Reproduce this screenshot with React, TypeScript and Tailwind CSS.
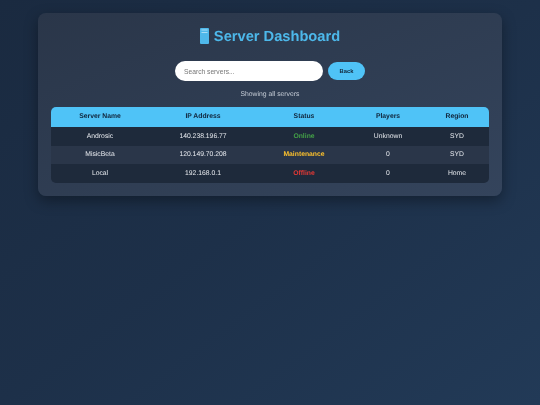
export default function App() {
  const rows = [
    { name: "Androsic", ip: "140.238.196.77", status: "Online", color: "text-[#43a047]", players: "Unknown", region: "SYD", bg: "bg-[#1e2a3b]" },
    { name: "MisicBeta", ip: "120.149.70.208", status: "Maintenance", color: "text-[#fbc02d]", players: "0", region: "SYD", bg: "bg-[#2a3649]" },
    { name: "Local", ip: "192.168.0.1", status: "Offline", color: "text-[#e53935]", players: "0", region: "Home", bg: "bg-[#1e2a3b]" },
  ];
  return (
    <div className="w-[540px] h-[405px] overflow-hidden bg-gradient-to-br from-[#1a2a40] via-[#1d3049] to-[#223a57] blur-[0.35px] [text-rendering:geometricPrecision] font-['Liberation_Sans',Arial,sans-serif] pt-[13px] px-[38px]">
      <div className="h-[182.5px] rounded-[8px] bg-gradient-to-br from-[#2a3649] to-[#34445c] px-[13px] pt-[13px] shadow-[0_5px_14px_rgba(0,0,0,0.35)]">
        <div className="flex h-[20px] items-center justify-center gap-[5px]">
          <svg width="9" height="16" viewBox="0 0 9 16" className="shrink-0">
            <rect x="0" y="0" width="9" height="16" rx="1" fill="#4fb8ea" />
            <rect x="1.5" y="1.5" width="6" height="1" fill="#a8dcf5" />
            <rect x="1.5" y="4" width="6" height="1" fill="#a8dcf5" />
          </svg>
          <h1 className="pt-[1px] text-[14.67px] leading-[20px] font-bold text-[#4db8ea]">Server Dashboard</h1>
        </div>
        <div className="mt-[15px] flex items-center justify-center gap-[5px]">
          <input
            readOnly
            placeholder="Search servers..."
            className="w-[148px] h-[20px] rounded-full bg-white px-[9px] text-[6.7px] text-[#333] placeholder:text-[#777] outline-none"
          />
          <button className="w-[37px] h-[18px] rounded-full bg-[#4fc3f7] text-[5.8px] font-bold text-[#12263a]">Back</button>
        </div>
        <p className="mt-[9px] text-center text-[6.8px] leading-[10px] text-[#c5ccd6]">Showing all servers</p>
        <table className="mt-[7px] w-[438px] table-fixed border-collapse text-[6.8px]">
          <colgroup>
            <col className="w-[98px]" />
            <col className="w-[108px]" />
            <col className="w-[94px]" />
            <col className="w-[74px]" />
            <col className="w-[64px]" />
          </colgroup>
          <thead>
            <tr className="h-[20px] bg-[#4fc3f7] text-[#10243a]">
              <th className="rounded-tl-[5px] pt-[1px] font-bold">Server Name</th>
              <th className="pt-[1px] font-bold">IP Address</th>
              <th className="pt-[1px] font-bold">Status</th>
              <th className="pt-[1px] font-bold">Players</th>
              <th className="rounded-tr-[5px] pt-[1px] font-bold">Region</th>
            </tr>
          </thead>
          <tbody>
            {rows.map((r, i) => (
              <tr key={r.name} className={`h-[18.67px] ${r.bg} text-[#e6e9ee]`}>
                <td className={`pt-[1px] text-center ${i === 2 ? "rounded-bl-[5px]" : ""}`}>{r.name}</td>
                <td className="pt-[1px] text-center">{r.ip}</td>
                <td className={`pt-[1px] text-center font-bold ${r.color}`}>{r.status}</td>
                <td className="pt-[1px] text-center">{r.players}</td>
                <td className={`pt-[1px] text-center ${i === 2 ? "rounded-br-[5px]" : ""}`}>{r.region}</td>
              </tr>
            ))}
          </tbody>
        </table>
      </div>
    </div>
  );
}
